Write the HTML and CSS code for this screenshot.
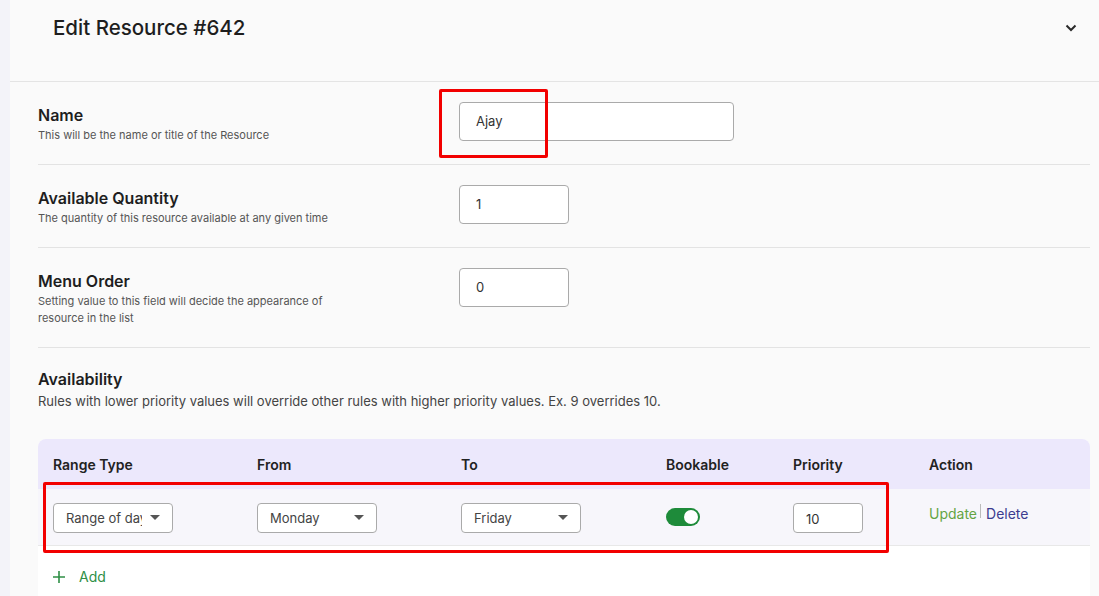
FILE: index.html
```html
<!DOCTYPE html>
<html lang="en">
<head>
    <meta charset="UTF-8">
    <meta name="viewport" content="width=device-width, initial-scale=1.0">
    <title>Edit Resource</title>
    <link rel="stylesheet" href="styles.css">
</head>
<body>
    <div class="panel">
        <div class="panel-header">
            <h1 class="panel-title">Edit Resource #642</h1>
            <svg class="chevron" width="12" height="8" viewBox="0 0 12 8">
                <path d="M1.5 1.5 L6 6 L10.5 1.5" fill="none" stroke="#2a2a2a" stroke-width="2"/>
            </svg>
        </div>

        <div class="form">
            <div class="field">
                <div class="field-label">
                    <h3>Name</h3>
                    <p>This will be the name or title of the Resource</p>
                </div>
                <div class="text-input wide">Ajay</div>
            </div>
            <div class="field">
                <div class="field-label">
                    <h3>Available Quantity</h3>
                    <p>The quantity of this resource available at any given time</p>
                </div>
                <div class="text-input small">1</div>
            </div>
            <div class="field">
                <div class="field-label">
                    <h3>Menu Order</h3>
                    <p>Setting value to this field will decide the appearance of resource in the list</p>
                </div>
                <div class="text-input small">0</div>
            </div>

            <div class="availability">
                <h3>Availability</h3>
                <p>Rules with lower priority values will override other rules with higher priority values. Ex. 9 overrides 10.</p>
            </div>

            <div class="rules">
                <div class="rules-row rules-head">
                    <div>Range Type</div>
                    <div>From</div>
                    <div>To</div>
                    <div>Bookable</div>
                    <div>Priority</div>
                    <div>Action</div>
                </div>
                <div class="rules-row rules-item">
                    <div><div class="select"><span class="select-text clip">Range of days</span><span class="caret"></span></div></div>
                    <div><div class="select"><span class="select-text">Monday</span><span class="caret"></span></div></div>
                    <div><div class="select"><span class="select-text">Friday</span><span class="caret"></span></div></div>
                    <div><span class="toggle"><span class="knob"></span></span></div>
                    <div><div class="priority">10</div></div>
                    <div class="actions"><a class="update">Update</a><span class="divider"></span><a class="delete">Delete</a></div>
                </div>
                <div class="add-row">
                    <svg width="12" height="12" viewBox="0 0 12 12">
                        <path d="M6 0 V12 M0 6 H12" stroke="#2f8f46" stroke-width="1.6"/>
                    </svg>
                    <span>Add</span>
                </div>
            </div>
        </div>

        <div class="mark mark-name"></div>
        <div class="mark mark-row"></div>
    </div>
</body>
</html>
```

FILE: styles.css
```css
body {
    margin: 0;
    padding: 0;
    background: #f3f3f9;
    font-family: Inter, "Noto Sans", Arial, sans-serif;
    color: #1e1e1e;
    height: 596px;
    overflow: hidden;
}
.panel {
    position: relative;
    margin-left: 10px;
    background: #fafafa;
    min-height: 596px;
}
.panel-header {
    display: flex;
    justify-content: space-between;
    height: 82px;
    box-sizing: border-box;
    padding: 15px 22px 0 43px;
    border-bottom: 1px solid #e4e4e4;
}
.panel-title {
    margin: 0;
    font-size: 20.5px;
    font-weight: 500;
    line-height: 26px;
    color: #1e1e1e;
}
.chevron {
    margin-top: 9px;
}
.form {
    padding: 0 9px 0 28px;
}
.field {
    display: flex;
    align-items: flex-start;
    padding: 20px 0 20px;
    border-bottom: 1px solid #e3e3e3;
}
.field-label {
    width: 421px;
    padding-top: 3px;
}
.field-label h3,
.availability h3 {
    margin: 0;
    font-size: 16px;
    font-weight: 600;
    line-height: 20px;
}
.field-label p {
    margin: 2px 0 0;
    max-width: 300px;
    font-size: 11px;
    line-height: 17px;
    color: #555;
}
.text-input {
    height: 39px;
    box-sizing: border-box;
    border: 1px solid #aaa;
    border-radius: 4px;
    background: #fff;
    padding: 0 16px;
    font-size: 13px;
    line-height: 37px;
    color: #333;
}
.wide {
    width: 275px;
}
.small {
    width: 110px;
}
.availability {
    padding: 21px 0 29px;
}
.availability p {
    margin: 3px 0 0;
    font-size: 13px;
    line-height: 18px;
    color: #444;
}
.rules {
    background: #fff;
    border-radius: 8px 8px 0 0;
    min-height: 160px;
}
.rules-row {
    display: grid;
    grid-template-columns: 204px 204px 205px 127px 136px 1fr;
    align-items: center;
}
.rules-row > div {
    padding-left: 15px;
}
.rules-head {
    height: 50px;
    background: #ece8fc;
    border-radius: 8px 8px 0 0;
    font-size: 14px;
    font-weight: 600;
    color: #222;
}
.rules-item {
    height: 57px;
    box-sizing: border-box;
    background: #f7f6fb;
    border-bottom: 1px solid #e8e8e8;
}
.select {
    display: flex;
    align-items: center;
    justify-content: space-between;
    width: 120px;
    height: 30px;
    box-sizing: border-box;
    border: 1px solid #aaa;
    border-radius: 4px;
    background: #fff;
    padding: 0 12px;
    font-size: 13px;
    color: #444;
    margin-top: 1px;
}
.select-text {
    white-space: nowrap;
}
.clip {
    width: 76px;
    overflow: hidden;
}
.caret {
    width: 0;
    height: 0;
    border-left: 5px solid transparent;
    border-right: 5px solid transparent;
    border-top: 5px solid #555;
}
.toggle {
    display: inline-flex;
    justify-content: flex-end;
    align-items: center;
    width: 34px;
    height: 18px;
    box-sizing: border-box;
    padding: 0 2px;
    border-radius: 9px;
    background: #1e8b3a;
    vertical-align: middle;
    margin-top: -4px;
}
.knob {
    width: 14px;
    height: 14px;
    border-radius: 50%;
    background: #fff;
}
.priority {
    width: 70px;
    height: 30px;
    box-sizing: border-box;
    border: 1px solid #aaa;
    border-radius: 4px;
    background: #fff;
    padding: 0 12px;
    font-size: 13px;
    line-height: 30px;
    color: #333;
    margin-top: 1px;
}
.actions {
    display: flex;
    align-items: center;
    font-size: 14px;
    margin-top: -8px;
}
.update {
    color: #64a443;
}
.delete {
    color: #3c3c90;
}
.divider {
    width: 1px;
    height: 14px;
    margin: -4px 5px 0 3px;
    background: #bbb;
}
.add-row {
    display: flex;
    align-items: center;
    gap: 14px;
    padding: 22px 15px;
    font-size: 14px;
    color: #2f8f46;
}
.mark {
    position: absolute;
    border: 3px solid #f20000;
    border-radius: 2px;
}
.mark-name {
    left: 429px;
    top: 89px;
    width: 103px;
    height: 63px;
}
.mark-row {
    left: 33px;
    top: 482px;
    width: 840px;
    height: 65px;
}
```
